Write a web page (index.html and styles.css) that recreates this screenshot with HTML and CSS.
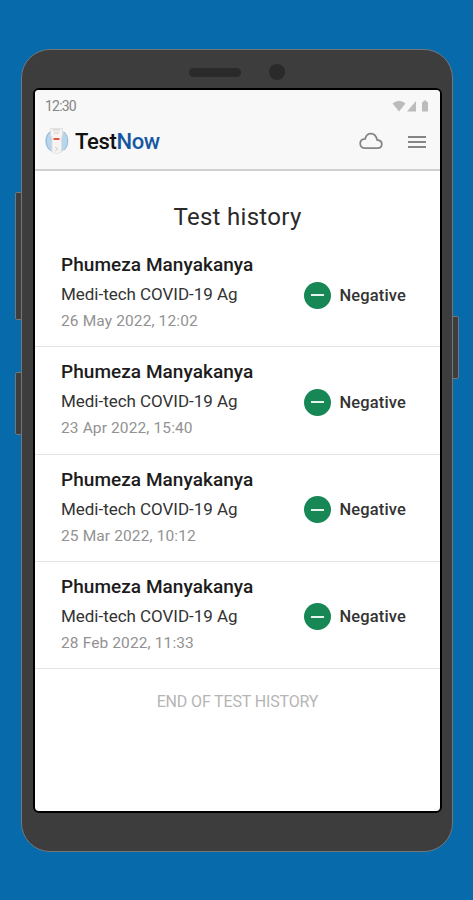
FILE: index.html
```
<!DOCTYPE html>
<html lang="en">
<head>
  <meta charset="UTF-8">
  <title>TestNow - Test history</title>
  <meta name="viewport" content="width=device-width, initial-scale=1.0">
  <link rel="stylesheet" href="styles.css">
</head>
<body>

  <div class="phone">
    <span class="side-btn side-btn-volume"></span>
    <span class="side-btn side-btn-extra"></span>
    <span class="side-btn side-btn-power"></span>

    <div class="phone-top">
      <span class="speaker"></span>
      <span class="camera"></span>
    </div>

    <div class="screen">
      <header class="app-header">
        <div class="status-bar">
          <span class="clock">12:30</span>
          <svg class="status-icons" width="38" height="12" viewBox="0 0 38 12">
            <path d="M0.5 3.5Q7 -2 13.5 3.5L7 11.5Z"/>
            <path d="M15 11.5L24 1V11.5Z"/>
            <path d="M30 2H31.5V0.5H34.5V2H36V11.5H30Z"/>
          </svg>
        </div>

        <div class="nav-bar">
          <svg class="logo" width="26" height="28" viewBox="0 0 26 28">
            <path d="M8 3C-1 7 -1 21 8 25Z" fill="#b9d5ea"/>
            <path d="M17 3C26 7 26 21 17 25Z" fill="#b9d5ea"/>
            <path d="M6 5C1 9 1 19 6 23" fill="none" stroke="#8db9db"/>
            <path d="M20 5C25 9 25 19 20 23" fill="none" stroke="#8db9db"/>
            <path d="M6.5 1.5H18.5V8L17.5 11V25L12.5 27L8 25V11L6.5 8Z" fill="#f6f4f2" stroke="#dcdcdc" stroke-width=".8"/>
            <path d="M9 3H16M10 6H15" stroke="#cbcbcb"/>
            <rect x="9.5" y="11" width="6" height="2" fill="#df5546"/>
            <path d="M11 20L14 22L11 24" fill="none" stroke="#d2d2d2"/>
          </svg>
          <span class="brand">Test<span class="brand-now">Now</span></span>

          <svg class="cloud" width="24" height="18" viewBox="0 0 24 18">
            <path d="M6 16.2H18.5C21.3 16.2 22.8 14.3 22.8 12C22.8 9.8 21.2 8.2 18.2 8C17.2 4 15.3 1.7 12 1.7C8.8 1.7 7 3.4 6.2 6.8C3 7 1.2 9 1.2 11.6C1.2 14.2 3.2 16.2 6 16.2Z"/>
          </svg>
          <svg class="menu" width="18" height="14" viewBox="0 0 18 14">
            <path d="M0 2H18M0 7H18M0 12H18"/>
          </svg>
        </div>
      </header>

      <h1>Test history</h1>

      <ul class="history">
        <li class="test">
          <div class="details">
            <h2>Phumeza Manyakanya</h2>
            <p class="kit">Medi-tech COVID-19 Ag</p>
            <p class="date">26 May 2022, 12:02</p>
          </div>
          <span class="result-icon"></span>
          <span class="result">Negative</span>
        </li>
        <li class="test">
          <div class="details">
            <h2>Phumeza Manyakanya</h2>
            <p class="kit">Medi-tech COVID-19 Ag</p>
            <p class="date">23 Apr 2022, 15:40</p>
          </div>
          <span class="result-icon"></span>
          <span class="result">Negative</span>
        </li>
        <li class="test">
          <div class="details">
            <h2>Phumeza Manyakanya</h2>
            <p class="kit">Medi-tech COVID-19 Ag</p>
            <p class="date">25 Mar 2022, 10:12</p>
          </div>
          <span class="result-icon"></span>
          <span class="result">Negative</span>
        </li>
        <li class="test">
          <div class="details">
            <h2>Phumeza Manyakanya</h2>
            <p class="kit">Medi-tech COVID-19 Ag</p>
            <p class="date">28 Feb 2022, 11:33</p>
          </div>
          <span class="result-icon"></span>
          <span class="result">Negative</span>
        </li>
      </ul>

      <p class="end">END OF TEST HISTORY</p>
    </div>
  </div>

</body>
</html>
```
FILE: styles.css
```
* {
  box-sizing: border-box;
}

body {
  font-family: Roboto, sans-serif;
  background: #076bab;
  margin: 0;
  padding: 49px 0 0 21px;
  height: 900px;
  overflow: hidden;
}

h1, h2, p, ul {
  margin: 0;
  padding: 0;
  font-weight: 400;
}

/* device */
.phone {
  position: relative;
  width: 432px;
  height: 803px;
  background: #3d3d3d;
  border: 1.5px solid #72777a;
  border-radius: 29px;
  padding: 0 11px;
}

.side-btn {
  position: absolute;
  width: 7px;
  background: #3d3d3d;
  border: 1px solid #72777a;
}

.side-btn-volume {
  left: -7px;
  top: 142px;
  height: 128px;
  border-radius: 2px 0 0 2px;
}

.side-btn-extra {
  left: -7px;
  top: 322px;
  height: 63px;
  border-radius: 2px 0 0 2px;
}

.side-btn-power {
  right: -7px;
  top: 266px;
  height: 63px;
  border-radius: 0 2px 2px 0;
}

.phone-top {
  display: flex;
  align-items: center;
  gap: 28px;
  height: 38px;
  padding: 6px 0 0 156px;
}

.speaker {
  width: 52px;
  height: 9px;
  border-radius: 5px;
  background: #2a2a2a;
}

.camera {
  width: 16px;
  height: 16px;
  border-radius: 50%;
  background: #2a2a2a;
}

.screen {
  width: 409px;
  height: 725px;
  background: #fff;
  border: 2px solid #000;
  border-radius: 6px;
  overflow: hidden;
}

/* header */
.app-header {
  height: 81px;
  background: #f8f8f8;
  border-bottom: 2px solid #d0d0d0;
}

.status-bar {
  display: flex;
  justify-content: space-between;
  align-items: center;
  height: 32px;
  padding: 0 10px 0 10px;
}

.clock {
  font-size: 14px;
  letter-spacing: -0.8px;
  color: #858585;
}

.status-icons {
  fill: #bcbcbc;
}

.nav-bar {
  display: flex;
  align-items: center;
  height: 38px;
  padding: 0 14px 0 9px;
}

.brand {
  margin-left: 5px;
  font-size: 22px;
  font-weight: 500;
  letter-spacing: -0.35px;
  color: #111;
}

.brand-now {
  color: #1557a0;
}

.cloud {
  margin-left: auto;
  fill: none;
  stroke: #858585;
  stroke-width: 1.8;
}

.menu {
  margin: 2px 0 0 25px;
  stroke: #858585;
  stroke-width: 1.8;
}

/* history list */
h1 {
  margin-top: 31px;
  font-size: 24px;
  line-height: 30px;
  letter-spacing: 0.3px;
  text-align: center;
  color: #2a2a2a;
}

.history {
  list-style: none;
  margin-top: 8px;
}

.test {
  display: flex;
  align-items: center;
  height: 107.25px;
  padding: 0 34px 0 26px;
  border-bottom: 1.5px solid #e4e4e4;
}

.details {
  flex: 1;
  padding-bottom: 2px;
}

h2 {
  font-size: 19px;
  font-weight: 500;
  line-height: 28px;
  letter-spacing: 0.05px;
  color: #1c1c1c;
}

.kit {
  font-size: 17px;
  line-height: 30px;
  letter-spacing: -0.03px;
  color: #333;
}

.date {
  font-size: 15.5px;
  line-height: 24px;
  letter-spacing: 0.12px;
  color: #929292;
}

.result-icon {
  display: flex;
  align-items: center;
  justify-content: center;
  width: 27px;
  height: 27px;
  margin-top: 4px;
  border-radius: 50%;
  background: #168755;
}

.result-icon::before {
  content: "";
  width: 13px;
  height: 2px;
  background: #e4f4ec;
}

.result {
  margin: 4px 0 0 8px;
  font-size: 16.5px;
  font-weight: 500;
  letter-spacing: 0.15px;
  color: #333;
}

.end {
  margin-top: 21px;
  font-size: 16px;
  line-height: 24px;
  letter-spacing: -0.15px;
  text-align: center;
  color: #b5b5b5;
}
```
